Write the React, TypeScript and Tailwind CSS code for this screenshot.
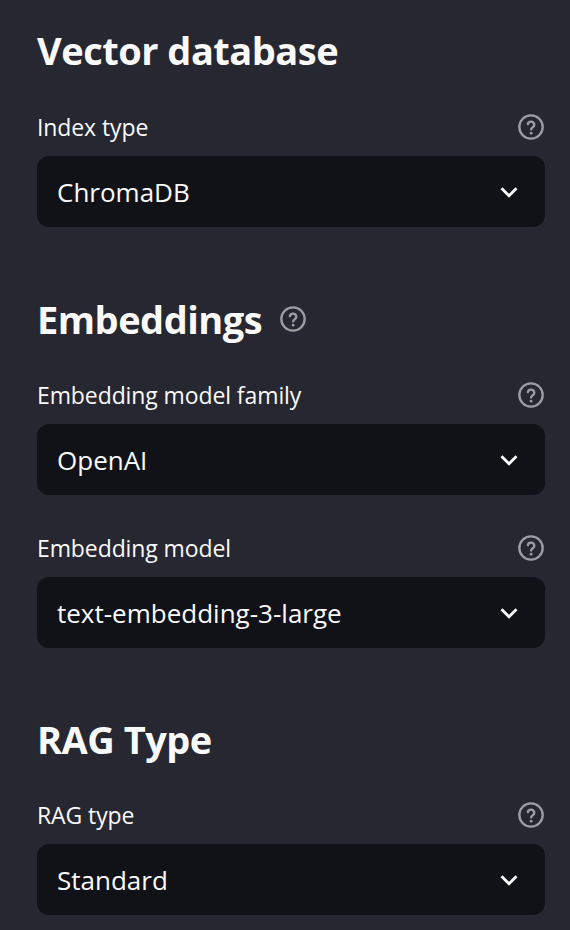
import { ReactNode } from 'react'

function HelpIcon({ size = 28 }: { size?: number }) {
  return (
    <svg width={size} height={size} viewBox="0 0 24 24" fill="none" className="shrink-0">
      <circle cx="12" cy="12" r="10" stroke="#9d9ea3" strokeWidth="2" />
      <path
        d="M9.3 9.5a2.8 2.8 0 0 1 5.5 0.8c0 1.8-2.7 2.3-2.7 3.9"
        stroke="#9d9ea3"
        strokeWidth="2"
        strokeLinecap="round"
        fill="none"
      />
      <circle cx="12.1" cy="17.3" r="1.2" fill="#9d9ea3" />
    </svg>
  )
}

function Chevron() {
  return (
    <svg width="34" height="34" viewBox="0 0 24 24" fill="#fafafa">
      <path d="M16.59 8.59L12 13.17 7.41 8.59 6 10l6 6 6-6z" />
    </svg>
  )
}

function Heading({ children, help, className }: { children: ReactNode; help?: boolean; className?: string }) {
  return (
    <div className={`h-[48px] flex items-center gap-[17px] ${className ?? ''}`}>
      <h2 className="text-[38px] font-bold leading-none tracking-[-0.5px] text-[#fafafa]">{children}</h2>
      {help && <HelpIcon size={28} />}
    </div>
  )
}

function Select({ label, value, className }: { label: string; value: string; className?: string }) {
  return (
    <div className={className}>
      <div className="h-[38px] flex items-center justify-between">
        <span className="text-[23px] leading-none tracking-[-0.1px] text-[#fafafa]">{label}</span>
        <HelpIcon />
      </div>
      <div className="mt-[10px] h-[71px] rounded-[12px] bg-[#111218] flex items-center justify-between pl-[20px] pr-[19px]">
        <span className="text-[26px] leading-none text-[#fafafa]">{value}</span>
        <Chevron />
      </div>
    </div>
  )
}

export default function App() {
  return (
    <div
      className="w-[570px] h-[930px] overflow-hidden bg-[#262730] pl-[37px] pr-[25px] pt-[26px]"
      style={{ fontFamily: '"Open Sans", "Noto Sans", sans-serif' }}
    >
      <Heading>Vector database</Heading>
      <Select className="mt-[34px]" label="Index type" value="ChromaDB" />

      <Heading className="mt-[68px]" help>
        Embeddings
      </Heading>
      <Select className="mt-[33px]" label="Embedding model family" value="OpenAI" />
      <Select className="mt-[34px]" label="Embedding model" value="text-embedding-3-large" />

      <Heading className="mt-[67px]">RAG Type</Heading>
      <Select className="mt-[33px]" label="RAG type" value="Standard" />
    </div>
  )
}
